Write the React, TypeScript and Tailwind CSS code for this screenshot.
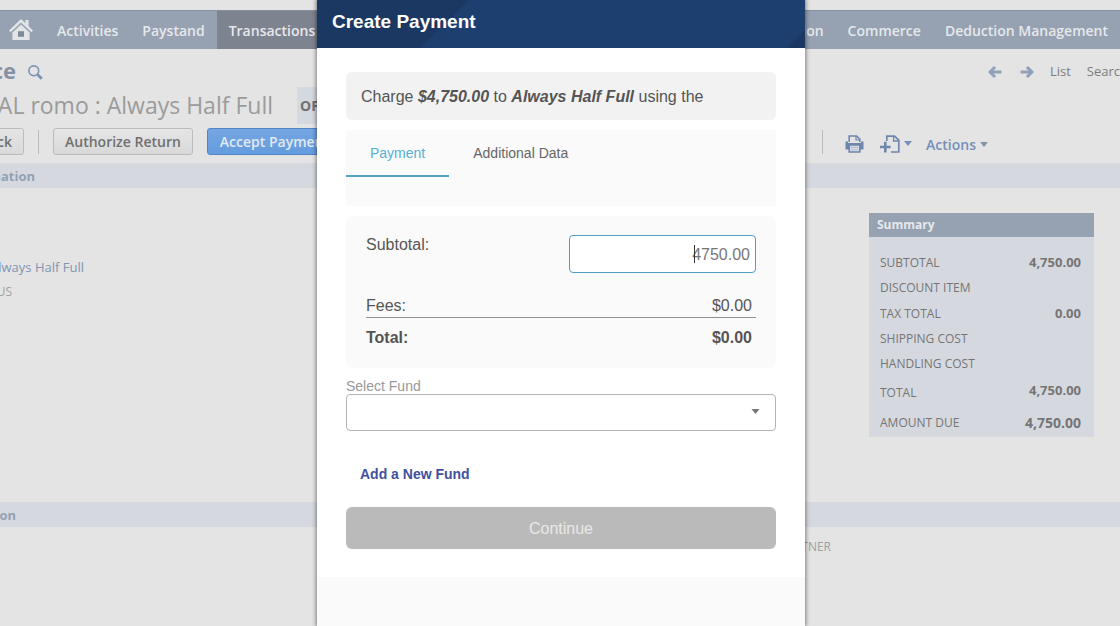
import React, { useState } from "react";

const summaryRows = [
  { label: "SUBTOTAL", value: "4,750.00", row: "h-[25px]", cell: "text-[13px]" },
  { label: "DISCOUNT ITEM", value: "", row: "h-[26px]", cell: "text-[13px]" },
  { label: "TAX TOTAL", value: "0.00", row: "h-[25px]", cell: "text-[13px]" },
  { label: "SHIPPING COST", value: "", row: "h-[25px]", cell: "text-[13px]" },
  { label: "HANDLING COST", value: "", row: "h-[26px]", cell: "text-[13px]" },
  { label: "TOTAL", value: "4,750.00", row: "h-8", cell: "pb-1 text-[13px]" },
  { label: "AMOUNT DUE", value: "4,750.00", row: "h-7", cell: "text-sm" },
];

function HomeIcon() {
  return (
    <svg viewBox="0 0 24 22" className="h-[22px] w-6" fill="#e3e4e6" aria-hidden="true">
      <path d="M12 0 0 11.5 1.6 13.2 12 3.4 22.4 13.2 24 11.5 19.6 7.2V1H16.4V4.2Z" />
      <path fillRule="evenodd" d="M12 5.4 3.4 13.4V21H20.6V13.4ZM9 12.4H15V17.6H9Z" />
      <path d="M9 12.4H15V17.6H9Z" fill="#7f8999" />
    </svg>
  );
}

function SearchIcon() {
  return (
    <svg viewBox="0 0 15 15" className="size-[15px]" fill="none" stroke="#7b93b4" aria-hidden="true">
      <circle cx="5.8" cy="5.8" r="4.9" strokeWidth="1.6" />
      <path d="M9.2 9.2 13.8 13.8" strokeWidth="2.8" />
    </svg>
  );
}

function ArrowIcon({ flip }: { flip?: boolean }) {
  return (
    <svg viewBox="0 0 14 12" className="h-3 w-3.5" fill="none" stroke="#91a1ba" strokeWidth="3" aria-hidden="true">
      <path d={flip ? "M0.5 6H12M7 1 12 6 7 11" : "M13.5 6H2M7 1 2 6 7 11"} />
    </svg>
  );
}

function PrinterIcon() {
  return (
    <svg viewBox="0 0 19 18" className="h-[18px] w-[19px]" aria-hidden="true">
      <path d="M4.2 7V1H11.6L14.8 4.2V7" fill="#e4e4e4" stroke="#6e86ab" strokeWidth="1.6" />
      <path d="M11 1V5H15" fill="none" stroke="#6e86ab" strokeWidth="1.2" />
      <path d="M0.5 6.5 3 6.5V8H16V6.5H18.5V14.5H0.5Z" fill="#6e86ab" />
      <path d="M4.2 10H14.8V17H4.2Z" fill="#d5dbe5" stroke="#6e86ab" strokeWidth="1.6" />
      <path d="M6 12.5H13M6 14.8H13" stroke="#b4c0d2" strokeWidth="1" />
    </svg>
  );
}

function AddDocIcon() {
  return (
    <svg viewBox="0 0 20 18" className="h-[18px] w-5" fill="none" stroke="#6e86ab" aria-hidden="true">
      <path d="M6.8 6V1.2H14.5L18.8 5.2V17H11" strokeWidth="1.7" />
      <path d="M13.6 1.5V6H18.8" strokeWidth="1.3" />
      <path d="M0 12H10.6M5.3 6.8V17.4" strokeWidth="2.6" />
    </svg>
  );
}

function Caret({ className }: { className: string }) {
  return (
    <svg viewBox="0 0 8 5" className={className} fill="currentColor" aria-hidden="true">
      <path d="M0 0H8L4 5Z" />
    </svg>
  );
}

function NavLink({ children, active }: { children: React.ReactNode; active?: boolean }) {
  return (
    <a href="#" className={`flex h-full items-center px-3 pt-0.5 ${active ? "bg-[#7e8390]" : ""}`}>
      {children}
    </a>
  );
}

function RecordPage() {
  return (
    <div className="pt-2.5 whitespace-nowrap">
      <nav className="flex h-[39px] justify-between border-t border-[#8791a1] bg-[#96a1b2] text-sm font-semibold text-[#e6e8eb]">
        <div className="flex items-center pl-[9px]">
          <a href="#" aria-label="Home" className="mr-3">
            <HomeIcon />
          </a>
          <NavLink>Activities</NavLink>
          <NavLink>Paystand</NavLink>
          <NavLink active>Transactions</NavLink>
        </div>
        <div className="flex items-center">
          <NavLink>Customization</NavLink>
          <NavLink>Commerce</NavLink>
          <NavLink>Deduction Management</NavLink>
        </div>
      </nav>

      <div className="flex h-[38px] items-center justify-between pt-2">
        <div className="flex items-center gap-3">
          <h1 className="flex w-4 justify-end pb-1 text-[22px] font-bold text-[#8692a3]">Invoice</h1>
          <button aria-label="Search records">
            <SearchIcon />
          </button>
        </div>
        <div className="-mr-2 flex items-center text-[13px] text-[#7d7d7d]">
          <button aria-label="Previous" className="mr-[18px]">
            <ArrowIcon />
          </button>
          <button aria-label="Next" className="mr-4">
            <ArrowIcon flip />
          </button>
          <a href="#" className="mr-4">List</a>
          <a href="#">Search</a>
        </div>
      </div>

      <div className="flex h-[37px] items-center gap-6">
        <h2 className="flex w-[273px] justify-end text-[23px] text-[#9b9b9b]">AL romo : Always Half Full</h2>
        <span className="flex h-full items-center bg-[#d4d8df] px-[3px] text-sm font-bold text-[#707070]">OPEN</span>
      </div>

      <div className="flex items-start justify-between pt-1">
        <div className="flex items-center text-sm font-semibold text-[#707070]">
          <div className="flex w-6 justify-end">
            <button className="h-[27px] rounded-[3px] border border-[#bcbcbc] bg-linear-to-b from-[#e5e5e5] to-[#d9d9d9] px-[11px] pt-px">Back</button>
          </div>
          <span className="mx-3.5 h-6 w-px bg-[#b9b9b9]" />
          <button className="h-[27px] rounded-[3px] border border-[#bcbcbc] bg-linear-to-b from-[#e5e5e5] to-[#d9d9d9] px-[11px] pt-px">Authorize Return</button>
          <button className="ml-3.5 h-[27px] rounded-[3px] border border-[#5384c4] bg-linear-to-b from-[#74a5e2] to-[#659cdf] px-3 pt-px text-[#e2e9f2]">Accept Payment</button>
        </div>
        <div className="mr-[132px] flex h-[27px] items-center text-[#7590b8]">
          <span className="mr-[22px] h-6 w-px bg-[#b9b9b9]" />
          <button aria-label="Print" className="mr-4 pt-1">
            <PrinterIcon />
          </button>
          <button aria-label="New record" className="mr-3.5 flex items-center gap-1 pt-1">
            <AddDocIcon />
            <Caret className="h-[5px] w-2" />
          </button>
          <button className="flex items-center gap-1 pt-1.5 text-sm font-semibold">
            Actions
            <Caret className="h-[5px] w-2 text-[#8593a8]" />
          </button>
        </div>
      </div>

      <section className="pt-2">
        <h3 className="flex h-[25px] items-center bg-[#d5d9df] pt-0.5 text-[13px] font-bold text-[#93a1b5]">
          <span className="flex w-[35px] justify-end">Information</span>
        </h3>
        <div className="flex min-h-[314px] items-start justify-between pt-[25px]">
          <div className="flex flex-col gap-[7px] pt-11">
            <a href="#" className="flex w-[84px] justify-end text-[13px] leading-5 text-[#8195b3]">Always Half Full</a>
            <span className="flex w-3 justify-end text-xs leading-4 text-[#a0a0a0]">US</span>
          </div>
          <table className="mr-[26px] w-[225px] bg-[#d5d9df] text-[#757575]">
            <caption className="h-6 bg-[#96a1b2] px-2 text-left text-xs leading-6 font-bold text-[#e6e8eb]">Summary</caption>
            <tbody>
              <tr className="h-[13px]" />
              {summaryRows.map((r) => (
                <tr key={r.label} className={r.row}>
                  <th scope="row" className="p-0 pl-[11px] text-left text-xs font-normal">{r.label}</th>
                  <td className={`pr-[13px] text-right font-bold ${r.cell}`}>{r.value}</td>
                </tr>
              ))}
            </tbody>
          </table>
        </div>
      </section>

      <section>
        <h3 className="flex h-[25px] items-center bg-[#d5d9df] pt-0.5 text-[13px] font-bold text-[#93a1b5]">
          <span className="flex w-4 justify-end">Classification</span>
        </h3>
        <div className="mr-[289px] flex justify-end pt-3 text-xs leading-4 text-[#a0a0a0]">PARTNER</div>
      </section>
    </div>
  );
}

function PaymentDialog() {
  const [amount, setAmount] = useState("4750.00");
  return (
    <div
      role="dialog"
      aria-labelledby="dialog-title"
      className="flex min-h-full w-full max-w-[488px] flex-col bg-white font-['Liberation_Sans',Arial,sans-serif] text-base text-[#555] shadow-[0_0_4px_1px_rgba(0,0,0,0.45)]"
    >
      <header className="relative flex h-12 items-center bg-[#1c3f70] px-[15px] pb-1">
        <svg viewBox="0 0 488 48" preserveAspectRatio="none" className="absolute inset-0 size-full" fill="#1a3862" aria-hidden="true">
          <path d="M0 0H152L103 48H0ZM488 30V48H470Z" />
        </svg>
        <h2 id="dialog-title" className="relative text-[19px] font-bold text-white">Create Payment</h2>
      </header>

      <div className="flex flex-col px-[29px] pt-6 pb-7">
        <p className="flex h-12 items-center rounded-md bg-[#f2f2f2] px-[15px] pt-0.5">
          <span>
            Charge <strong className="italic">$4,750.00</strong> to <strong className="italic">Always Half Full</strong> using the
          </span>
        </p>

        <div role="tablist" className="mt-2.5 flex h-[76px] items-start bg-[#fafafa] text-sm">
          <button role="tab" aria-selected="true" className="h-[47px] border-b-2 border-[#55a3c2] px-6 text-[#55b0d5]">Payment</button>
          <button role="tab" aria-selected="false" className="h-[47px] border-b-2 border-transparent px-6 text-[#666]">Additional Data</button>
        </div>

        <div className="mt-2.5 rounded-md bg-[#fafafa] px-5 pt-[19px] pb-[19px]">
          <div className="flex items-start justify-between">
            <label htmlFor="subtotal" className="leading-5">Subtotal:</label>
            <div className="relative">
              <input
                id="subtotal"
                value={amount}
                onChange={(e) => setAmount(e.target.value)}
                className="block h-[38px] w-[187px] rounded border border-[#4f9dc0] bg-white px-[5px] pt-0.5 text-right text-[#777] outline-none"
              />
              <span className="absolute top-2.5 right-[61px] h-[18px] w-px bg-[#333]" />
            </div>
          </div>
          <dl>
            <div className="mt-[22px] flex justify-between border-b border-[#8f8f8f] pr-1 leading-[22px]">
              <dt>Fees:</dt>
              <dd>$0.00</dd>
            </div>
            <div className="flex justify-between pt-[9px] pr-1 leading-[22px] font-bold">
              <dt>Total:</dt>
              <dd>$0.00</dd>
            </div>
          </dl>
        </div>

        <label htmlFor="fund" className="mt-2.5 text-sm leading-4 text-[#999]">Select Fund</label>
        <div className="relative">
          <select id="fund" className="block h-[37px] w-full appearance-none rounded border border-[#b3b3b3] bg-white px-3">
            <option value="" />
          </select>
          <Caret className="pointer-events-none absolute top-[15px] right-4 h-[5px] w-[9px] text-[#777]" />
        </div>

        <button className="mt-[34px] self-start px-3.5 text-sm leading-[18px] font-bold text-[#4350a0]">Add a New Fund</button>
        <button className="mt-6 h-[42px] rounded-md bg-[#bababa] pt-0.5 text-[#e9e9e9]">Continue</button>
      </div>
      <footer className="flex-1 bg-[#fafafa]" />
    </div>
  );
}

export default function App() {
  return (
    <div className="relative min-h-screen overflow-hidden bg-[#e4e4e4] font-['Open_Sans','Noto_Sans',sans-serif]">
      <RecordPage />
      <div className="absolute inset-0 flex justify-center pl-0.5">
        <PaymentDialog />
      </div>
    </div>
  );
}
